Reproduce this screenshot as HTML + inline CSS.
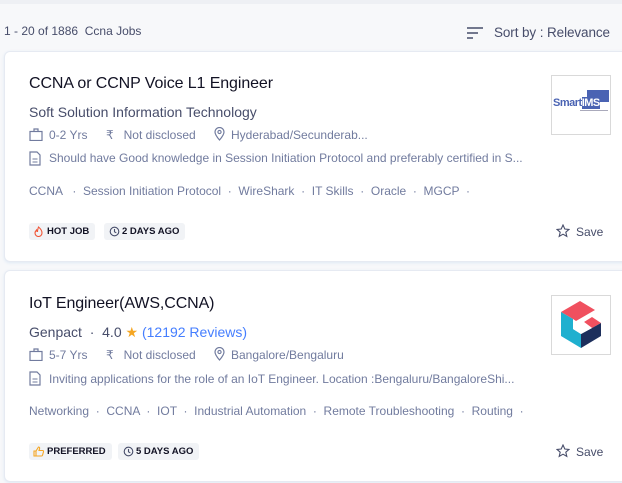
<!DOCTYPE html>
<html><head><meta charset="utf-8"><style>
*{margin:0;padding:0;box-sizing:border-box}
body{width:622px;height:483px;overflow:hidden;background:#f7f8fa;font-family:"Liberation Sans",sans-serif;position:relative;color:#474d6a}
.a{position:absolute;white-space:nowrap}
.card{position:absolute;left:4px;width:640px;background:#fff;border:1px solid #e6eaf2;border-radius:6px;box-shadow:0 1px 3px rgba(0,106,194,.1)}
.t{font-size:16px;color:#121224;font-weight:500;letter-spacing:-.1px}
.c{font-size:14px;color:#474d6a}
.m{font-size:12px;color:#717b9e}
.tag{font-size:12px;color:#717b9e}
.b{font-size:9.5px;font-weight:bold;color:#121224;background:#f1f3f6;border-radius:3px;height:17px;line-height:17px;padding:0 6px 0 18px}
.logo{position:absolute;left:551px;width:60px;height:60px;border:1px solid #d9d9d9;background:#fff}
svg{position:absolute}
</style></head><body>
<div style="position:absolute;left:0;top:0;width:622px;height:4px;background:#eef0f4"></div>
<div class="a m" style="left:4px;top:24px;color:#474d6a;font-size:12px">1 - 20 of 1886&nbsp; Ccna Jobs</div>
<svg style="left:467px;top:27px" width="16" height="12"><path d="M0 1h16M0 6h11M0 11h6" stroke="#474d6a" stroke-width="1.6"/></svg>
<div class="a" style="left:494px;top:25px;font-size:13.5px;color:#474d6a;letter-spacing:-.1px">Sort by : Relevance</div>

<div class="card" style="top:51px;height:211px"></div>
<div class="a t" style="left:29px;top:75px">CCNA or CCNP Voice L1 Engineer</div>
<div class="a c" style="left:29px;top:104px">Soft Solution Information Technology</div>
<svg style="left:29px;top:128px" width="14" height="13"><rect x="1" y="3.5" width="12" height="9" fill="none" stroke="#717b9e" stroke-width="1.2"/><path d="M5 3.5V1h4v2.5" fill="none" stroke="#717b9e" stroke-width="1.2"/></svg>
<div class="a m" style="left:49px;top:128px">0-2 Yrs</div>
<div class="a m" style="left:106px;top:128px">₹&nbsp;&nbsp; Not disclosed</div>
<svg style="left:214px;top:127px" width="11" height="14"><path d="M5.5 13C2 9 1 7 1 5a4.5 4.5 0 0 1 9 0c0 2-1 4-4.5 8z" fill="none" stroke="#717b9e" stroke-width="1.2"/><circle cx="5.5" cy="5" r="1.6" fill="none" stroke="#717b9e" stroke-width="1.1"/></svg>
<div class="a m" style="left:231px;top:128px">Hyderabad/Secunderab...</div>
<svg style="left:29px;top:151px" width="12" height="15"><path d="M1 1h7l3 3v10H1z" fill="none" stroke="#717b9e" stroke-width="1.2"/><path d="M3.5 8h5M3.5 11h5" stroke="#717b9e"/></svg>
<div class="a m" style="left:49px;top:151px">Should have Good knowledge in Session Initiation Protocol and preferably certified in S...</div>
<div class="a tag" style="left:29px;top:184px">CCNA &nbsp;&nbsp;· &nbsp;Session Initiation Protocol &nbsp;· &nbsp;WireShark &nbsp;· &nbsp;IT Skills &nbsp;· &nbsp;Oracle &nbsp;· &nbsp;MGCP &nbsp;·</div>
<div class="a b" style="left:29px;top:223px">HOT JOB</div>
<svg style="left:34px;top:226px" width="9" height="11"><path d="M4.5 1C7 3 8 5 8 7a3.5 3.5 0 0 1-7 0c0-1.5 1-2.5 1.5-3 0 1 .5 1.5 1 1.5C3.5 4 4 2.5 4.5 1z" fill="none" stroke="#f05537" stroke-width="1.1"/></svg>
<div class="a b" style="left:104px;top:223px">2 DAYS AGO</div>
<svg style="left:109px;top:226px" width="11" height="11"><circle cx="5.5" cy="5.5" r="4.3" fill="none" stroke="#474d6a" stroke-width="1.1"/><path d="M5.5 3v2.8l1.8 1" fill="none" stroke="#474d6a" stroke-width="1.1"/></svg>
<svg style="left:556px;top:224px" width="14" height="14"><path d="M7 1l1.8 4 4.2.4-3.2 2.8 1 4.2L7 10.2 3.2 12.4l1-4.2L1 5.4l4.2-.4z" fill="none" stroke="#474d6a" stroke-width="1.1"/></svg>
<div class="a" style="left:576px;top:225px;font-size:12px;color:#474d6a">Save</div>
<div class="logo" style="top:75px">
<div style="position:absolute;left:35px;top:14px;width:22px;height:12px;background:#4a63b3"></div>
<div style="position:absolute;left:1px;top:21px;font:bold 11px 'Liberation Sans',sans-serif;color:#4a63b3;letter-spacing:-.5px">Smart<span style="color:#fff;background:#4a63b3">IMS</span></div>
<div style="position:absolute;left:28px;top:34px;width:28px;height:1px;background:#aab"></div>
</div>

<div class="card" style="top:270px;height:212px"></div>
<div class="a t" style="left:29px;top:295px">IoT Engineer(AWS,CCNA)</div>
<div class="a c" style="left:29px;top:324px">Genpact &nbsp;· &nbsp;4.0 <span style="color:#f5a623">★</span> <span style="color:#457eff">(12192 Reviews)</span></div>
<svg style="left:29px;top:348px" width="14" height="13"><rect x="1" y="3.5" width="12" height="9" fill="none" stroke="#717b9e" stroke-width="1.2"/><path d="M5 3.5V1h4v2.5" fill="none" stroke="#717b9e" stroke-width="1.2"/></svg>
<div class="a m" style="left:49px;top:348px">5-7 Yrs</div>
<div class="a m" style="left:106px;top:348px">₹&nbsp;&nbsp; Not disclosed</div>
<svg style="left:214px;top:347px" width="11" height="14"><path d="M5.5 13C2 9 1 7 1 5a4.5 4.5 0 0 1 9 0c0 2-1 4-4.5 8z" fill="none" stroke="#717b9e" stroke-width="1.2"/><circle cx="5.5" cy="5" r="1.6" fill="none" stroke="#717b9e" stroke-width="1.1"/></svg>
<div class="a m" style="left:231px;top:348px">Bangalore/Bengaluru</div>
<svg style="left:29px;top:371px" width="12" height="15"><path d="M1 1h7l3 3v10H1z" fill="none" stroke="#717b9e" stroke-width="1.2"/><path d="M3.5 8h5M3.5 11h5" stroke="#717b9e"/></svg>
<div class="a m" style="left:49px;top:372px">Inviting applications for the role of an IoT Engineer. Location :Bengaluru/BangaloreShi...</div>
<div class="a tag" style="left:29px;top:404px">Networking &nbsp;· &nbsp;CCNA &nbsp;· &nbsp;IOT &nbsp;· &nbsp;Industrial Automation &nbsp;· &nbsp;Remote Troubleshooting &nbsp;· &nbsp;Routing &nbsp;·</div>
<div class="a b" style="left:29px;top:443px">PREFERRED</div>
<svg style="left:33px;top:446px" width="11" height="11"><path d="M1 5h2v5H1zM3 5l2.5-4c1 0 1.3.7 1 2L6 4.5h3.5c.8 0 1.2.6 1 1.3l-1 3.5c-.2.5-.6.7-1 .7H3" fill="none" stroke="#f5a623" stroke-width="1.1"/></svg>
<div class="a b" style="left:118px;top:443px">5 DAYS AGO</div>
<svg style="left:123px;top:446px" width="11" height="11"><circle cx="5.5" cy="5.5" r="4.3" fill="none" stroke="#474d6a" stroke-width="1.1"/><path d="M5.5 3v2.8l1.8 1" fill="none" stroke="#474d6a" stroke-width="1.1"/></svg>
<svg style="left:556px;top:444px" width="14" height="14"><path d="M7 1l1.8 4 4.2.4-3.2 2.8 1 4.2L7 10.2 3.2 12.4l1-4.2L1 5.4l4.2-.4z" fill="none" stroke="#474d6a" stroke-width="1.1"/></svg>
<div class="a" style="left:576px;top:445px;font-size:12px;color:#474d6a">Save</div>
<div class="logo" style="top:295px">
<svg style="left:-1px;top:-1px" width="60" height="60" viewBox="0 0 60 60">
<path d="M10 17L29 6L44 15L25 26L22 24Z" fill="#f0505f"/>
<path d="M10 17L22 24L22 34L30 39L30 53L10 41Z" fill="#1fb0cf"/>
<path d="M33 27L41 22L50 28L41 33Z" fill="#f0505f"/>
<path d="M30 53L50 41L50 28L41 33L30 39Z" fill="#1d2f5c"/>
<path d="M22 34L30 39L41 33L33 27L29 29L22 26Z" fill="#fff"/>
</svg>
</div>
</body></html>
